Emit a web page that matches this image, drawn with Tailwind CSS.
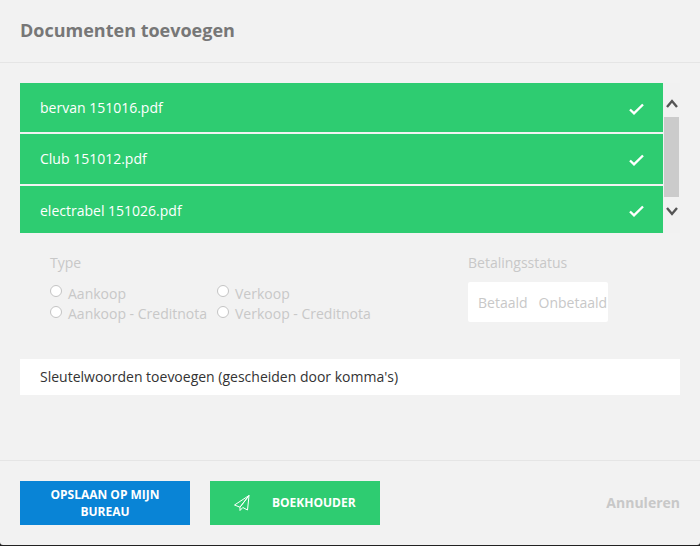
<!DOCTYPE html>
<html lang="en">
<head>
  <meta charset="UTF-8">
  <title>Documenten toevoegen</title>
  <script src="https://cdn.jsdelivr.net/npm/@tailwindcss/browser@4"></script>
</head>
<body class="bg-[#222222] font-['Open_Sans',sans-serif]">
  <div class="w-[700px] h-[545px] bg-[#f2f2f2] rounded-b-[3px] flex flex-col overflow-hidden">
    <!-- Header -->
    <header class="h-[63px] shrink-0 border-b border-[#e5e5e5] px-5 pt-[17px]">
      <h2 class="text-[18px] leading-[26px] font-bold text-[#777777]">Documenten toevoegen</h2>
    </header>

    <main class="h-[397px] shrink-0 px-5 pt-5">
      <!-- File list -->
      <div class="flex h-[150px]">
        <div class="w-[643px] flex flex-col gap-[2px] text-[14px] text-white">
          <div class="h-[49px] shrink-0 bg-[#2ecc71] pl-5 pr-[19px] flex items-center justify-between">
            <span>bervan 151016.pdf</span>
            <svg class="w-[15px] h-[12px] mt-[3px]" viewBox="0 0 15 12" fill="none" stroke="#ffffff" stroke-width="2.4"><path d="M1 6.5l4 3.8L14 1.5"/></svg>
          </div>
          <div class="h-[50px] shrink-0 bg-[#2ecc71] pl-5 pr-[19px] pb-[2px] flex items-center justify-between">
            <span>Club 151012.pdf</span>
            <svg class="w-[15px] h-[12px] mt-[3px]" viewBox="0 0 15 12" fill="none" stroke="#ffffff" stroke-width="2.4"><path d="M1 6.5l4 3.8L14 1.5"/></svg>
          </div>
          <div class="h-[47px] shrink-0 bg-[#2ecc71] pl-5 pr-[19px] pt-[2px] flex items-center justify-between">
            <span>electrabel 151026.pdf</span>
            <svg class="w-[15px] h-[12px] mt-[1px]" viewBox="0 0 15 12" fill="none" stroke="#ffffff" stroke-width="2.4"><path d="M1 6.5l4 3.8L14 1.5"/></svg>
          </div>
        </div>
        <!-- Scrollbar -->
        <div class="w-[17px] bg-[#f1f1f1] flex flex-col items-center">
          <div class="h-[34px] flex items-center justify-center">
            <svg class="w-[12px] h-[9px] mt-[7px]" viewBox="0 0 12 9" fill="none" stroke="#555555" stroke-width="2.4"><path d="M1 8l5-6 5 6"/></svg>
          </div>
          <div class="w-[15px] h-[80px] bg-[#cbcbcb]"></div>
          <div class="flex-1 flex items-center justify-center">
            <svg class="w-[12px] h-[9px] mt-[-7px]" viewBox="0 0 12 9" fill="none" stroke="#555555" stroke-width="2.4"><path d="M1 1l5 6 5-6"/></svg>
          </div>
        </div>
      </div>

      <!-- Options -->
      <div class="flex pl-[30px] pt-5 text-[14px] text-[#c8c8c8]">
        <div class="w-[418px]">
          <p class="leading-[20px]">Type</p>
          <div class="grid grid-cols-[167px_1fr] mt-[11px] leading-[20px]">
            <label class="flex"><span class="w-[12px] h-[12px] mt-[1px] mr-[6px] rounded-full border border-[#c4c4c4] bg-white"></span>Aankoop</label>
            <label class="flex"><span class="w-[12px] h-[12px] mt-[1px] mr-[6px] rounded-full border border-[#c4c4c4] bg-white"></span>Verkoop</label>
            <label class="flex"><span class="w-[12px] h-[12px] mt-[2px] mr-[6px] rounded-full border border-[#c4c4c4] bg-white"></span>Aankoop - Creditnota</label>
            <label class="flex"><span class="w-[12px] h-[12px] mt-[2px] mr-[6px] rounded-full border border-[#c4c4c4] bg-white"></span>Verkoop - Creditnota</label>
          </div>
        </div>
        <div>
          <p class="leading-[20px]">Betalingsstatus</p>
          <div class="mt-[9px] w-[140px] h-[40px] bg-white rounded-[2px] flex items-center pl-[10px] gap-[11px]">
            <span>Betaald</span>
            <span>Onbetaald</span>
          </div>
        </div>
      </div>

      <!-- Keywords -->
      <div class="mt-[35px] h-[36px] bg-white px-5 pb-[2px] flex items-center text-[14px] text-[#333333]">
        Sleutelwoorden toevoegen (gescheiden door komma's)
      </div>
    </main>

    <!-- Footer -->
    <footer class="flex-1 border-t border-[#e5e5e5] px-5 flex items-start pt-5">
      <button class="w-[170px] h-[44px] bg-[#0984d6] text-white text-[12px] leading-[17px] font-bold px-5">OPSLAAN OP MIJN BUREAU</button>
      <button class="ml-5 w-[170px] h-[44px] bg-[#2ecc71] text-white text-[12px] font-bold flex items-center pl-6">
        <svg class="w-[16px] h-[16px]" viewBox="0 0 16 16" fill="none" stroke="#ffffff" stroke-width="1"><path d="M15 .5L.5 10l5.5 2.2L15 .5zM15 .5L6 12.2V15.5l2.8-3 4.7 2.5L15 .5z"/></svg>
        <span class="ml-[22px]">BOEKHOUDER</span>
      </button>
      <span class="ml-auto mt-[13px] text-[14px] leading-[18px] font-bold text-[#c8c8c8]">Annuleren</span>
    </footer>
  </div>
</body>
</html>
